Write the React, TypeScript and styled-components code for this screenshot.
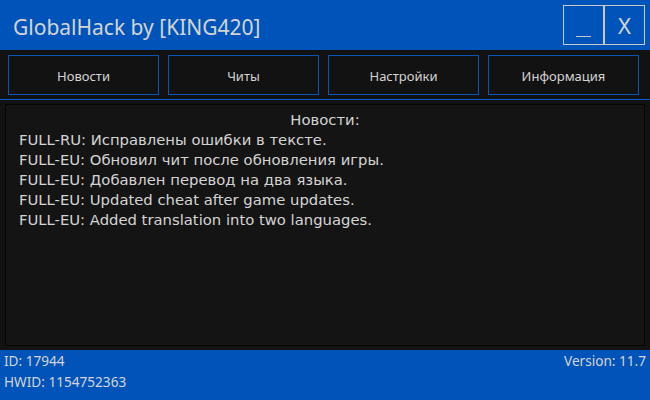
import React from 'react';
import styled, { createGlobalStyle } from 'styled-components';

const BLUE = '#0054b9';
const TEXT = '#d4d4d4';

const GlobalStyle = createGlobalStyle`
  html, body {
    margin: 0;
    padding: 0;
    background: #121212;
  }
  body {
    font-family: "Noto Sans", "Open Sans", sans-serif;
  }
`;

const Window = styled.div`
  width: 650px;
  height: 400px;
  display: flex;
  flex-direction: column;
  background: #121212;
  color: ${TEXT};
  overflow: hidden;
`;

const TitleBar = styled.div`
  height: 50px;
  flex-shrink: 0;
  background: ${BLUE};
  display: flex;
  align-items: flex-start;
  padding: 0 5px 0 13px;
  box-sizing: border-box;
`;

const Title = styled.div`
  flex: 1;
  font-size: 21px;
  line-height: 54px;
`;

const WindowButtons = styled.div`
  display: flex;
  margin-top: 5px;
`;

const WindowButton = styled.button`
  width: 41px;
  height: 40px;
  box-sizing: border-box;
  border: 1px solid #c8c8c8;
  background: transparent;
  color: ${TEXT};
  font-family: inherit;
  font-size: 22px;
  padding: 0;
  display: flex;
  align-items: center;
  justify-content: center;
  cursor: pointer;
`;

const MinimizeMark = styled.span`
  display: block;
  width: 15px;
  height: 1px;
  background: #c8c8c8;
  margin-top: 22px;
`;

const Tabs = styled.div`
  height: 50px;
  flex-shrink: 0;
  display: grid;
  grid-template-columns: repeat(4, 1fr);
  gap: 9px;
  padding: 5px 11px 4px 8px;
  box-sizing: border-box;
  border-bottom: 1px solid #0a5fd0;
`;

const Tab = styled.button`
  background: #121212;
  border: 1px solid #0a55b8;
  color: ${TEXT};
  font-family: inherit;
  font-size: 13px;
  padding: 1px 0 0;
  cursor: pointer;
`;

const Panel = styled.div`
  flex: 1;
  margin: 4px 5px 4px 5px;
  border: 1px solid #050505;
  background: #141414;
  padding: 5px 13px 3px;
  font-family: "DejaVu Sans", "Noto Sans", sans-serif;
  font-size: 14.8px;
  line-height: 20px;
`;

const PanelHeader = styled.div`
  text-align: center;
`;

const Line = styled.div`
  white-space: nowrap;
`;

const Footer = styled.div`
  height: 50px;
  flex-shrink: 0;
  background: ${BLUE};
  display: flex;
  justify-content: space-between;
  padding: 0 4px;
  font-size: 13.6px;
  line-height: 21px;
`;

const news = [
  'FULL-RU: Исправлены ошибки в тексте.',
  'FULL-EU: Обновил чит после обновления игры.',
  'FULL-EU: Добавлен перевод на два языка.',
  'FULL-EU: Updated cheat after game updates.',
  'FULL-EU: Added translation into two languages.',
];

const tabs = ['Новости', 'Читы', 'Настройки', 'Информация'];

const App: React.FC = () => (
  <>
    <GlobalStyle />
    <Window>
      <TitleBar>
        <Title>GlobalHack by [KING420]</Title>
        <WindowButtons>
          <WindowButton aria-label="minimize">
            <MinimizeMark />
          </WindowButton>
          <WindowButton aria-label="close">X</WindowButton>
        </WindowButtons>
      </TitleBar>
      <Tabs>
        {tabs.map((t) => (
          <Tab key={t}>{t}</Tab>
        ))}
      </Tabs>
      <Panel>
        <PanelHeader>Новости:</PanelHeader>
        {news.map((n) => (
          <Line key={n}>{n}</Line>
        ))}
      </Panel>
      <Footer>
        <div>
          <div>ID: 17944</div>
          <div>HWID: 1154752363</div>
        </div>
        <div>Version: 11.7</div>
      </Footer>
    </Window>
  </>
);

export default App;
